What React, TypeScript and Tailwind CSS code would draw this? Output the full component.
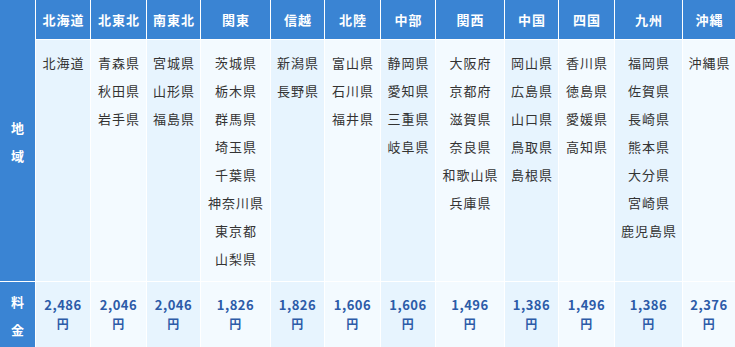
import React from 'react';

interface Region {
  name: string;
  prefs: string[];
  price: string;
}

const regions: Region[] = [
  { name: '北海道', prefs: ['北海道'], price: '2,486' },
  { name: '北東北', prefs: ['青森県', '秋田県', '岩手県'], price: '2,046' },
  { name: '南東北', prefs: ['宮城県', '山形県', '福島県'], price: '2,046' },
  { name: '関東', prefs: ['茨城県', '栃木県', '群馬県', '埼玉県', '千葉県', '神奈川県', '東京都', '山梨県'], price: '1,826' },
  { name: '信越', prefs: ['新潟県', '長野県'], price: '1,826' },
  { name: '北陸', prefs: ['富山県', '石川県', '福井県'], price: '1,606' },
  { name: '中部', prefs: ['静岡県', '愛知県', '三重県', '岐阜県'], price: '1,606' },
  { name: '関西', prefs: ['大阪府', '京都府', '滋賀県', '奈良県', '和歌山県', '兵庫県'], price: '1,496' },
  { name: '中国', prefs: ['岡山県', '広島県', '山口県', '鳥取県', '島根県'], price: '1,386' },
  { name: '四国', prefs: ['香川県', '徳島県', '愛媛県', '高知県'], price: '1,496' },
  { name: '九州', prefs: ['福岡県', '佐賀県', '長崎県', '熊本県', '大分県', '宮崎県', '鹿児島県'], price: '1,386' },
  { name: '沖縄', prefs: ['沖縄県'], price: '2,376' },
];

const colBg = (i: number) => (i % 2 === 0 ? 'bg-[#e7f4fe]' : 'bg-[#f3faff]');

const App: React.FC = () => {
  return (
    <div
      className="w-[735px] h-[347px] bg-white overflow-hidden"
      style={{ fontFamily: '"Noto Sans CJK JP", "Noto Sans", sans-serif' }}
    >
      <div className="grid gap-px grid-cols-[35px_54px_55px_53px_69px_53px_55px_54px_68px_53px_55px_67px_52px] grid-rows-[39px_241px_65px]">
        {/* left labels */}
        <div className="row-span-2 bg-[#3a84d3] flex flex-col items-center justify-center text-white font-bold text-[13px] leading-[28px] pt-[2px]">
          <span>地</span>
          <span>域</span>
        </div>
        {regions.map((r) => (
          <div
            key={r.name}
            className="bg-[#3a84d3] flex items-center justify-center text-white font-bold text-[13px] tracking-[1px] pl-px"
          >
            {r.name}
          </div>
        ))}
        {regions.map((r, i) => (
          <div
            key={r.name + '-prefs'}
            className={`${colBg(i)} flex flex-col items-center pt-[9px] text-[#333] text-[13px] leading-[28px] tracking-[1px] pl-px`}
          >
            {r.prefs.map((p) => (
              <span key={p}>{p}</span>
            ))}
          </div>
        ))}

        <div className="bg-[#3a84d3] flex flex-col items-center justify-center text-white font-bold text-[13px] leading-[28px] pt-[2px]">
          <span>料</span>
          <span>金</span>
        </div>
        {regions.map((r, i) => (
          <div
            key={r.name + '-price'}
            className={`${colBg(i)} flex flex-col items-center justify-center text-[#2c5ba8] font-bold text-[13px] leading-[19px] tracking-[0.5px] pb-[2px]`}
          >
            <span>{r.price}</span>
            <span className="text-[12px]">円</span>
          </div>
        ))}
      </div>
    </div>
  );
};

export default App;
